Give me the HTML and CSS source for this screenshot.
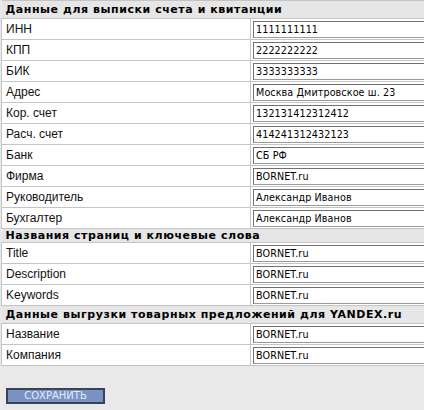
FILE: index.html
```html
<!DOCTYPE html>
<html lang="ru">
<head>
<meta charset="utf-8">
<title>Данные</title>
<link rel="stylesheet" href="styles.css">
</head>
<body>
<form class="page">
<table class="form-table">
  <tr class="head"><td colspan="2">Данные для выписки счета и квитанции</td></tr>
  <tr><td class="label">ИНН</td><td class="field"><input class="inp" value="1111111111"></td></tr>
  <tr><td class="label">КПП</td><td class="field"><input class="inp" value="2222222222"></td></tr>
  <tr><td class="label">БИК</td><td class="field"><input class="inp" value="3333333333"></td></tr>
  <tr><td class="label">Адрес</td><td class="field"><input class="inp" value="Москва Дмитровское ш. 23"></td></tr>
  <tr><td class="label">Кор. счет</td><td class="field"><input class="inp" value="132131412312412"></td></tr>
  <tr><td class="label">Расч. счет</td><td class="field"><input class="inp" value="414241312432123"></td></tr>
  <tr><td class="label">Банк</td><td class="field"><input class="inp" value="СБ РФ"></td></tr>
  <tr><td class="label">Фирма</td><td class="field"><input class="inp" value="BORNET.ru"></td></tr>
  <tr><td class="label">Руководитель</td><td class="field"><input class="inp" value="Александр Иванов"></td></tr>
  <tr><td class="label">Бухгалтер</td><td class="field"><input class="inp" value="Александр Иванов"></td></tr>
  <tr class="head head-tight"><td colspan="2">Названия страниц и ключевые слова</td></tr>
  <tr><td class="label">Title</td><td class="field"><input class="inp" value="BORNET.ru"></td></tr>
  <tr><td class="label">Description</td><td class="field"><input class="inp" value="BORNET.ru"></td></tr>
  <tr><td class="label">Keywords</td><td class="field"><input class="inp" value="BORNET.ru"></td></tr>
  <tr class="head"><td colspan="2">Данные выгрузки товарных предложений для YANDEX.ru</td></tr>
  <tr><td class="label">Название</td><td class="field"><input class="inp" value="BORNET.ru"></td></tr>
  <tr><td class="label">Компания</td><td class="field"><input class="inp" value="BORNET.ru"></td></tr>
</table>
<div class="actions"><button type="button" class="save">СОХРАНИТЬ</button></div>
</form>
</body>
</html>
```
FILE: styles.css
```css
html, body {
  margin: 0;
  padding: 0;
  overflow: hidden;
  background: #e9e9e9;
}
.page {
  margin: 0;
  padding: 0 0 0 1px;
  width: 500px;
}
.form-table {
  border-collapse: collapse;
  width: 500px;
  font-family: "DejaVu Sans", Verdana, sans-serif;
}
.form-table td {
  border: 1px solid #c4c4c4;
  padding: 0;
}
.head td {
  background: #e6e6e6;
  font-weight: bold;
  font-size: 11px;
  letter-spacing: 0.55px;
  height: 17px;
  line-height: 13px;
  padding: 0 0 0 4px;
  border-left: none;
  border-right: none;
}
.head-tight td {
  height: 13px;
}
.label {
  background: #fff;
  width: 244px;
  height: 20px;
  padding: 0 0 0 4px !important;
  font-family: "Liberation Sans", Arial, sans-serif;
  font-size: 12px;
  color: #111;
}
.field {
  background: #fff;
  padding: 0 0 0 2px !important;
}
.inp {
  display: block;
  box-sizing: border-box;
  width: 240px;
  height: 17px;
  margin: 0;
  padding: 0 0 0 2px;
  border: 1px solid #9a9a9a;
  border-top-color: #707070;
  border-left-color: #707070;
  font-family: "DejaVu Sans", Verdana, sans-serif;
  font-size: 9.6px;
  letter-spacing: 0.1px;
  color: #000;
  background: #fff;
}
.actions {
  padding: 19px 0 0 5px;
}
.save {
  width: 99px;
  height: 16px;
  margin: 0;
  padding: 0;
  background: #7b93c4;
  border: 2px solid #3a4258;
  color: #e6ecf6;
  font-family: "DejaVu Sans", Verdana, sans-serif;
  font-size: 10px;
  line-height: 12px;
}
```
